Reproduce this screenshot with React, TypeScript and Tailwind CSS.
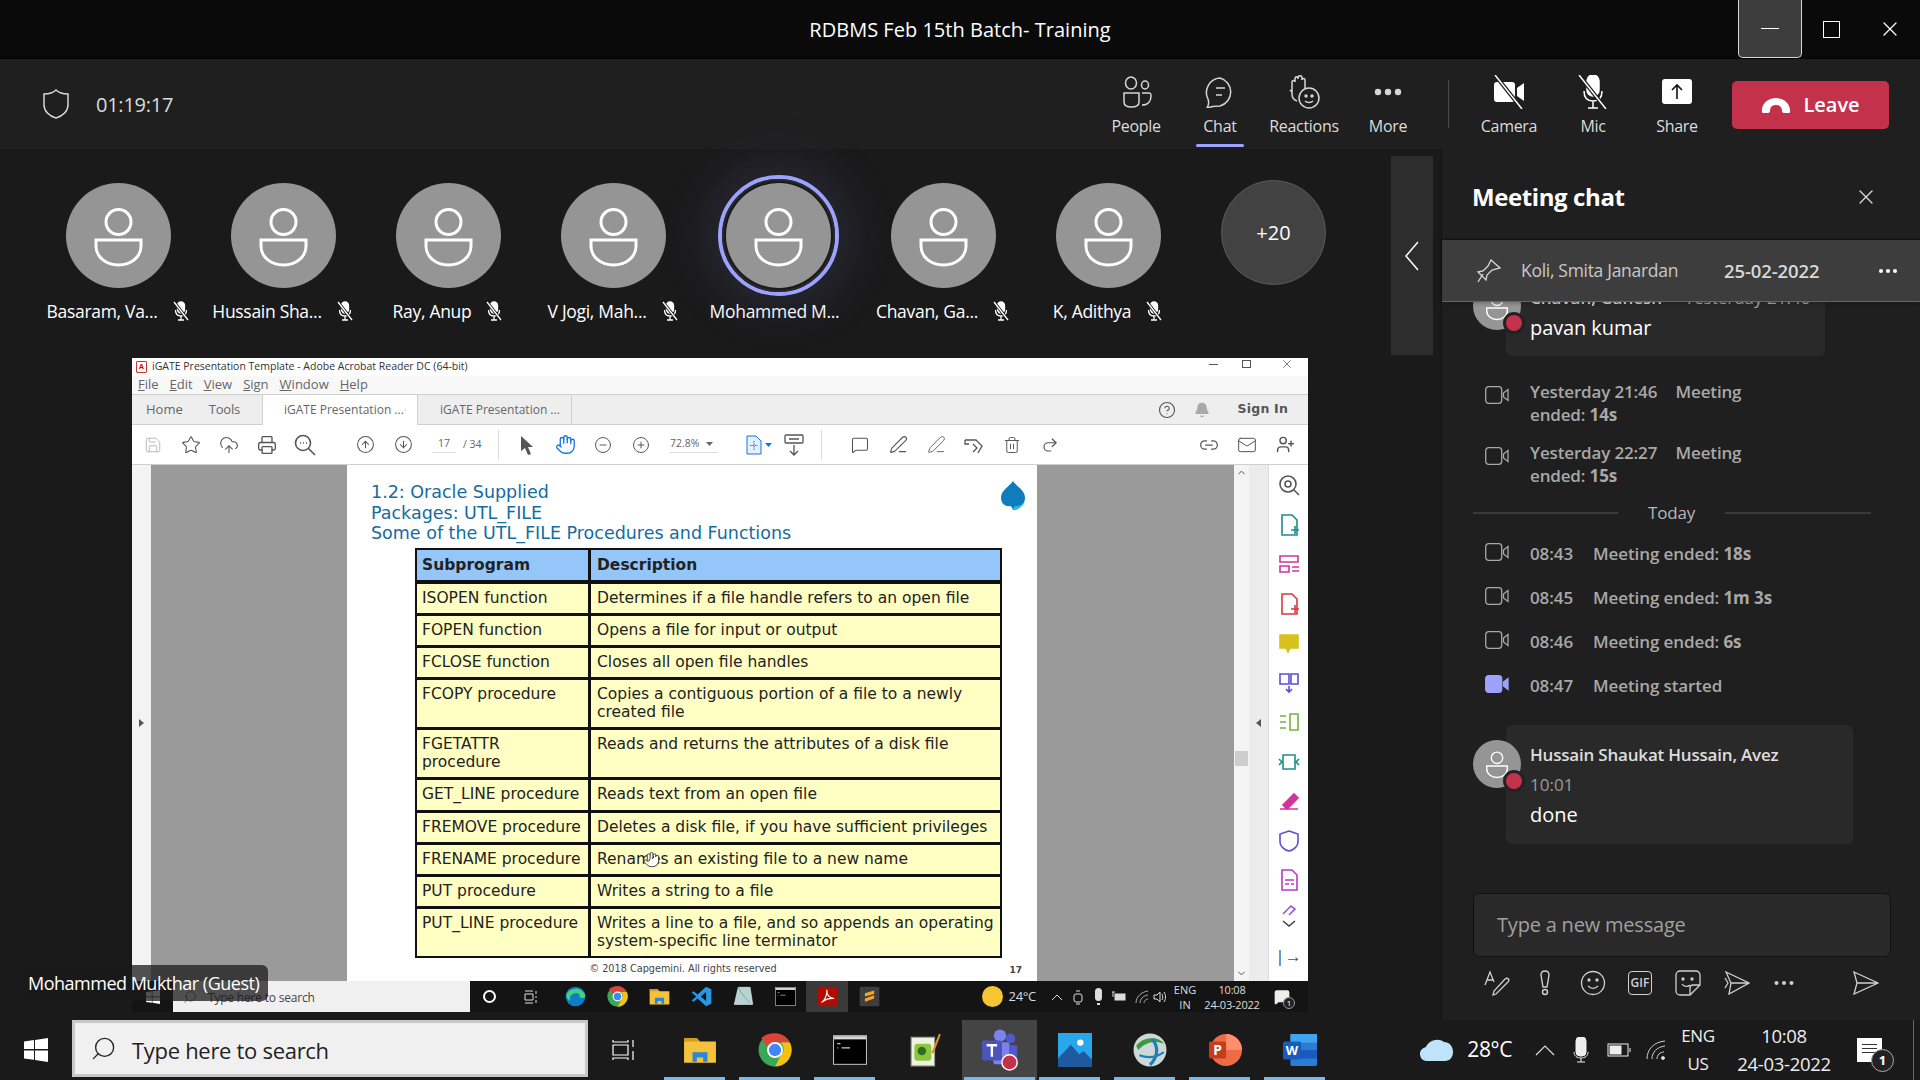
import {
  Bell,
  ChevronDown,
  ChevronUp,
  CircleArrowDown,
  CircleArrowUp,
  CircleHelp,
  CircleMinus,
  CirclePlus,
  CloudUpload,
  Hand,
  Link2,
  Mail,
  MessageSquare,
  PenLine,
  Printer,
  Redo2,
  Save,
  Search,
  Star,
  Trash2,
  UserPlus,
  X,
} from "lucide-react";

const seg = "font-['Open_Sans','Noto_Sans',sans-serif]";

const people = [
  { name: "Basaram, Va...", muted: true },
  { name: "Hussain Sha...", muted: true },
  { name: "Ray, Anup", muted: true },
  { name: "V Jogi, Mah...", muted: true },
  { name: "Mohammed M...", muted: false, active: true },
  { name: "Chavan, Ga...", muted: true },
  { name: "K, Adithya", muted: true },
];

const rows = [
  { a: "ISOPEN function", b: "Determines if a file handle refers to an open file", h: "h-[29px]" },
  { a: "FOPEN function", b: "Opens a file for input or output", h: "h-[29px]" },
  { a: "FCLOSE function", b: "Closes all open file handles", h: "h-[29px]" },
  { a: "FCOPY procedure", b: "Copies a contiguous portion of a file to a newly created file", h: "h-[47px]" },
  { a: "FGETATTR\nprocedure", b: "Reads and returns the attributes of a disk file", h: "h-[47px]" },
  { a: "GET_LINE procedure", b: "Reads text from an open file", h: "h-[30px]" },
  { a: "FREMOVE procedure", b: "Deletes a disk file, if you have sufficient privileges", h: "h-[29px]" },
  { a: "FRENAME procedure", b: "Renames an existing file to a new name", h: "h-[29px]" },
  { a: "PUT procedure", b: "Writes a string to a file", h: "h-[29px]" },
  { a: "PUT_LINE procedure", b: "Writes a line to a file, and so appends an operating system-specific line terminator", h: "h-[47px]" },
];

function PersonGlyph({ size = 105 }: { size?: number }) {
  return (
    <svg width={size} height={size} viewBox="0 0 105 105" fill="none" stroke="#fff" strokeWidth="3">
      <circle cx="52.5" cy="39" r="12.5" />
      <path d="M30 57h45v6c0 11-10 19-22.500 19S30 74 30 63z" />
    </svg>
  );
}

function MutedMic({ className = "" }: { className?: string }) {
  return (
    <svg className={className} width="20" height="20" viewBox="0 0 20 20" fill="none" stroke="#fff" strokeWidth="1.3">
      <rect x="6.500" y="1" width="7" height="11" rx="3.500" fill="#fff" />
      <path d="M4.500 9c0 4 2.500 6 5.500 6s5.500-2 5.500-6M10 15v4M7 19h6" />
      <path d="M3 1l14 18" stroke="#1a1a1a" strokeWidth="3" />
      <path d="M3 1l14 18" />
    </svg>
  );
}

function Participant({ name, muted, active }: { name: string; muted: boolean; active?: boolean }) {
  return (
    <div className="flex w-[165px] shrink-0 flex-col items-center pt-[34px]">
      <div className="relative h-[105px] w-[105px] rounded-full bg-[#959595]">
        {active && (
          <div className="absolute -inset-[8px] rounded-full border-[4px] border-[#9ea2ff] shadow-[0_0_45px_18px_rgba(98,100,167,0.16)]">
            <div className="h-full w-full rounded-full border-[2px] border-[#292929]" />
          </div>
        )}
        <div className="relative">
          <PersonGlyph />
        </div>
      </div>
      <div className={`mt-[11px] flex h-[24px] items-center gap-[13px] text-[17.500px] text-white ${seg} ${muted ? "" : "pr-[8px]"}`}>
        <span className="whitespace-nowrap tracking-[-0.3px]">{name}</span>
        {muted && <MutedMic />}
      </div>
    </div>
  );
}

function ToolItem({ label, children, selected }: { label: string; children: React.ReactNode; selected?: boolean }) {
  return (
    <div className={`relative flex h-[91px] w-[84px] flex-col items-center pt-[16px] ${seg}`}>
      <div className="flex h-[34px] items-center justify-center">{children}</div>
      <span className="mt-[5px] text-[16px] tracking-[-0.3px] text-[#dcdcdc]">{label}</span>
      {selected && <div className="absolute bottom-[3px] h-[3px] w-[48px] rounded bg-[#9ea2ff]" />}
    </div>
  );
}

function TitleBar() {
  return (
    <div className="flex h-[58px] shrink-0 items-center bg-[#0a0a0a]">
      <div className={`flex-1 pl-[182px] pt-[2px] text-center text-[20px] tracking-[0.02px] text-white ${seg}`}>RDBMS Feb 15th Batch- Training</div>
      <div className="flex h-full">
        <div className="flex w-[64px] items-center justify-center rounded-b-[5px] border-x border-b border-[#d8d8d8] bg-[#3d3d3d]">
          <div className="h-[1.500px] w-[18px] bg-white" />
        </div>
        <div className="flex w-[58px] items-center justify-center">
          <div className="h-[17px] w-[17px] border-[1.500px] border-white" />
        </div>
        <div className="flex w-[60px] items-center justify-center">
          <X size={24} strokeWidth={1.3} color="#fff" />
        </div>
      </div>
    </div>
  );
}

function MeetingBar() {
  return (
    <div className="flex h-[91px] shrink-0 items-center border-t border-[#000] bg-[#1f1f1f]">
      <svg className="ml-[42px]" width="28" height="32" viewBox="0 0 28 32" fill="none" stroke="#d8d8d8" strokeWidth="1.500">
        <path d="M14 2c3 3 7 4 12 4v11c0 6-5 11-12 13C7 28 2 23 2 17V6c5 0 9-1 12-4z" />
      </svg>
      <span className={`ml-[26px] mt-[1px] text-[20px] tracking-[-0.25px] text-[#dcdcdc] ${seg}`}>01:19:17</span>
      <div className="flex-1" />
      <ToolItem label="People">
        <svg width="32" height="32" viewBox="0 0 32 32" fill="none" stroke="#d6d6d6" strokeWidth="1.500">
          <ellipse cx="11" cy="7" rx="5.500" ry="6" />
          <ellipse cx="25" cy="9" rx="3.500" ry="4" />
          <path d="M4 17h15v9c0 3-3 5-7.500 5S4 29 4 26z" />
          <path d="M22 17h7c2 0 2 1 2 3 0 5-3 9-9 9" />
        </svg>
      </ToolItem>
      <ToolItem label="Chat" selected>
        <svg width="32" height="32" viewBox="0 0 32 32" fill="none" stroke="#d6d6d6" strokeWidth="1.500">
          <path d="M16 2a14.500 14.500 0 0 1 0 28c-4 0-8 0-13 2 2-3 2-6 1-9A14.500 14.500 0 0 1 16 2z" />
          <path d="M12 12h9M12 19h6" />
        </svg>
      </ToolItem>
      <ToolItem label="Reactions">
        <svg width="32" height="34" viewBox="0 0 32 34" fill="none" stroke="#d6d6d6" strokeWidth="1.500">
          <path d="M4 19V7c0-2 3-2 3 0V4c0-3 3-3 3 0V3c0-3 4-3 4 0v2c0-2 3-2 3 0v8M4 17l-2-2M9 26c-3-1-5-3-5-7" />
          <circle cx="21" cy="23" r="10" />
          <path d="M17 26c2 2 6 2 8 0" />
          <circle cx="18" cy="21" r="1" fill="#d6d6d6" />
          <circle cx="24" cy="21" r="1" fill="#d6d6d6" />
        </svg>
      </ToolItem>
      <ToolItem label="More">
        <svg width="28" height="8" viewBox="0 0 28 8" fill="#d6d6d6">
          <circle cx="4" cy="4" r="3.200" />
          <circle cx="14" cy="4" r="3.200" />
          <circle cx="24" cy="4" r="3.200" />
        </svg>
      </ToolItem>
      <div className="ml-[18px] mr-[18px] h-[48px] w-px bg-[#4a4a4a]" />
      <ToolItem label="Camera">
        <svg width="34" height="34" viewBox="0 0 34 34" fill="#fff">
          <rect x="2" y="7" width="21" height="20" rx="3" />
          <path d="M25 13l7-5v18l-7-5z" />
          <path d="M3 0l27 34" stroke="#1f1f1f" strokeWidth="4" />
          <path d="M3 0l27 34" stroke="#fff" strokeWidth="1.500" />
        </svg>
      </ToolItem>
      <ToolItem label="Mic">
        <svg width="34" height="34" viewBox="0 0 34 34" fill="none" stroke="#fff" strokeWidth="1.500">
          <rect x="11" y="0" width="12" height="21" rx="6" fill="#fff" />
          <path d="M8 16c0 7 4 10 9 10s9-3 9-10M17 26v7M12 33h10" />
          <path d="M3 0l27 34" stroke="#1f1f1f" strokeWidth="4" />
          <path d="M3 0l27 34" />
        </svg>
      </ToolItem>
      <ToolItem label="Share">
        <svg width="30" height="30" viewBox="0 0 30 30" fill="none">
          <rect x="0" y="2" width="30" height="25" rx="3" fill="#fff" />
          <path d="M15 22V8M10 13l5-5 5 5" stroke="#111" strokeWidth="1.600" />
        </svg>
      </ToolItem>
      <div className={`ml-[13px] mr-[31px] mt-[1px] flex h-[48px] w-[157px] items-center justify-center gap-[12px] rounded-[5px] bg-[#c4314b] text-[20px] font-semibold text-white ${seg}`}>
        <svg width="30" height="16" viewBox="0 0 30 16" fill="#fff">
          <path d="M1 15c-1-8 6-14 14-14s15 6 14 14c0 1-1 1-2 1h-4c-1 0-2-1-2-2 0-4-2-6-6-6s-6 2-6 6c0 1-1 2-2 2H3c-1 0-2 0-2-1z" />
        </svg>
        Leave
      </div>
    </div>
  );
}

function TopBtn({ children, active }: { children: React.ReactNode; active?: boolean }) {
  return (
    <span className={`flex w-[38px] items-center justify-center ${active ? "text-[#1473e6]" : "text-[#555]"}`}>{children}</span>
  );
}

function Acrobat() {
  return (
    <div className="flex h-[623px] shrink-0 flex-col bg-white">
      <div className={`flex h-[18px] items-center bg-white pl-[4px] text-[10.500px] text-[#333] ${seg}`}>
        <div className="mr-[5px] flex h-[12px] w-[11px] items-center justify-center rounded-[1px] border border-[#c33] text-[7px] font-bold text-[#c00]">A</div>
        <span>iGATE Presentation Template - Adobe Acrobat Reader DC (64-bit)</span>
        <div className="flex-1" />
        <div className="mb-[6px] mr-[24px] h-px w-[9px] bg-[#555]" />
        <div className="mb-[6px] mr-[29px] h-[8px] w-[9px] border border-[#555]" />
        <X size={14} strokeWidth={1.1} color="#333" className="mb-[6px] mr-[14px]" />
      </div>
      <div className={`flex h-[18px] items-center gap-[11px] bg-[#f8f8f8] pl-[6px] text-[13px] text-[#666] ${seg}`}>
        <span><u>F</u>ile</span>
        <span><u>E</u>dit</span>
        <span><u>V</u>iew</span>
        <span><u>S</u>ign</span>
        <span><u>W</u>indow</span>
        <span><u>H</u>elp</span>
      </div>
      <div className={`flex h-[31px] items-stretch border-y border-[#cfcfcf] bg-[#eeeeee] text-[13px] text-[#666] ${seg}`}>
        <div className="flex w-[130px] items-center gap-[26px] pl-[14px]">
          <span>Home</span>
          <span className="tracking-[-0.2px]">Tools</span>
        </div>
        <div className="-mb-px flex w-[156px] items-center justify-between border-x border-[#cfcfcf] bg-white pl-[21px] pr-[11px] text-[12px]">
          <span className="whitespace-nowrap">iGATE Presentation ...</span>
          <X size={10} strokeWidth={2.500} />
        </div>
        <div className="flex w-[154px] items-center border-r border-[#cfcfcf] pl-[22px] text-[12px]">
          <span className="whitespace-nowrap">iGATE Presentation ...</span>
        </div>
        <div className="flex-1" />
        <div className="flex items-center pr-[20px]">
          <CircleHelp size={18} strokeWidth={1.500} color="#555" />
          <Bell size={16} fill="#aaa" color="#aaa" className="ml-[18px]" />
          <span className="ml-[28px] font-['DejaVu_Sans',sans-serif] text-[12.500px] font-semibold tracking-[0.2px] text-[#555]">Sign In</span>
        </div>
      </div>
      <div className="flex h-[40px] items-center border-b border-[#cfcfcf] bg-white pl-[2px]">
        <TopBtn><Save size={18} strokeWidth={1.300} color="#b8b8b8" /></TopBtn>
        <TopBtn><Star size={20} strokeWidth={1.300} /></TopBtn>
        <TopBtn><CloudUpload size={20} strokeWidth={1.300} /></TopBtn>
        <TopBtn><Printer size={20} strokeWidth={1.600} /></TopBtn>
        <TopBtn>
          <svg width="22" height="22" viewBox="0 0 22 22" fill="none" stroke="#555" strokeWidth="1.600"><circle cx="9" cy="9" r="7.500" /><path d="M14.500 14.500L21 21" /><path d="M6 9h1M9 9h1M12 9h1" /></svg>
        </TopBtn>
        <div className="w-[22px]" />
        <TopBtn><CircleArrowUp size={19} strokeWidth={1.300} /></TopBtn>
        <TopBtn><CircleArrowDown size={19} strokeWidth={1.300} /></TopBtn>
        <span className={`ml-[10px] w-[24px] border-b border-[#ddd] text-center text-[10.500px] text-[#666] ${seg}`}>17</span>
        <span className={`ml-[7px] w-[26px] text-[10.500px] text-[#666] ${seg}`}>/ 34</span>
        <div className="ml-[9px] mr-[9px] h-[30px] w-px bg-[#ddd]" />
        <TopBtn>
          <svg width="14" height="20" viewBox="0 0 14 20" fill="#555"><path d="M1 1l12 11H8l3 7-3 1-3-7-4 3z" /></svg>
        </TopBtn>
        <TopBtn active><Hand size={21} strokeWidth={1.500} /></TopBtn>
        <TopBtn><CircleMinus size={18} strokeWidth={1.300} /></TopBtn>
        <TopBtn><CirclePlus size={18} strokeWidth={1.300} /></TopBtn>
        <span className={`ml-[10px] flex w-[48px] items-center border-b border-[#ddd] text-[10.500px] text-[#666] ${seg}`}>
          72.8%
          <svg className="ml-[7px]" width="7" height="4" viewBox="0 0 7 4" fill="#666"><path d="M0 0h7L3.500 4z" /></svg>
        </span>
        <div className="ml-[28px] flex w-[29px] items-center">
          <svg width="16" height="20" viewBox="0 0 16 20" fill="#e6f0fb" stroke="#1473e6"><path d="M1 1h9l5 5v13H1z" /><path d="M8 6v9M4 10.500h8" stroke="#1473e6" strokeDasharray="1.500 1" /></svg>
          <svg className="ml-[3px]" width="7" height="4" viewBox="0 0 7 4" fill="#1473e6"><path d="M0 0h7L3.500 4z" /></svg>
        </div>
        <TopBtn>
          <svg width="20" height="22" viewBox="0 0 20 22" fill="none" stroke="#555" strokeWidth="1.300"><rect x="1" y="1" width="18" height="8" rx="1" /><path d="M5 5h10M10 11v10M6 17l4 4 4-4" /></svg>
        </TopBtn>
        <div className="ml-[8px] h-[30px] w-px bg-[#ddd]" />
        <div className="ml-[19px] flex">
          <TopBtn><MessageSquare size={18} strokeWidth={1.400} /></TopBtn>
          <TopBtn><PenLine size={19} strokeWidth={1.400} /></TopBtn>
          <TopBtn><PenLine size={19} strokeWidth={1.100} /></TopBtn>
          <TopBtn>
            <svg width="20" height="18" viewBox="0 0 20 18" fill="none" stroke="#555" strokeWidth="1.300"><path d="M1 4h11l6 6-4 7M1 4v4h4" /><path d="M9 8l4 4-4 4" /></svg>
          </TopBtn>
          <TopBtn><Trash2 size={18} strokeWidth={1.300} /></TopBtn>
          <TopBtn><Redo2 size={18} strokeWidth={1.600} /></TopBtn>
        </div>
        <div className="flex-1" />
        <TopBtn><Link2 size={20} strokeWidth={1.500} /></TopBtn>
        <TopBtn><Mail size={20} strokeWidth={1.200} /></TopBtn>
        <TopBtn><UserPlus size={19} strokeWidth={1.800} /></TopBtn>
        <div className="w-[4px]" />
      </div>
      <div className="flex min-h-0 flex-1">
        <div className="flex w-[19px] items-center justify-center bg-[#f3f3f3]">
          <svg width="5" height="8" viewBox="0 0 5 8" fill="#555"><path d="M0 0l5 4-5 4z" /></svg>
        </div>
        <div className="w-[196px] bg-[#9a9a9a]" />
        <SlidePage />
        <div className="w-[197px] bg-[#9a9a9a]" />
        <div className="flex w-[15px] flex-col items-center justify-between bg-[#f4f4f4] py-[2px]">
          <ChevronUp size={11} color="#444" />
          <div className="mt-[70px] h-[15px] w-[13px] bg-[#cdcdcd]" />
          <ChevronDown size={11} color="#444" />
        </div>
        <div className="flex w-[19px] items-center justify-center bg-[#ececec]">
          <svg width="5" height="8" viewBox="0 0 5 8" fill="#555"><path d="M5 0L0 4l5 4z" /></svg>
        </div>
        <RightRail />
      </div>
    </div>
  );
}

function SlidePage() {
  return (
    <div className="relative w-[690px] bg-white font-['DejaVu_Sans',sans-serif]">
      <div className="pl-[24px] pt-[17px] text-[17.500px] leading-[20.500px] text-[#146c9e]">
        <div>1.2: Oracle Supplied</div>
        <div>Packages: UTL_FILE</div>
        <div>Some of the UTL_FILE Procedures and Functions</div>
      </div>
      <svg className="absolute right-[11px] top-[16px]" width="26" height="30" viewBox="0 0 26 30">
        <path d="M13 0c4 6 12 9 12 17 0 6-5 9-9 8l-3 4-2-4C6 26 1 23 1 17 1 9 9 6 13 0z" fill="#0f7cbd" />
        <path d="M16 25c-2 0-4 3-3 4 4 1 9-3 12-8-2 2-5 4-9 4z" fill="#2bb6e8" />
      </svg>
      <div className="absolute left-[68px] top-[83px] flex w-[587px] flex-col gap-[3px] border-[2px] border-[#111] bg-[#111] text-[15.500px] leading-[18px] text-[#222]">
        <div className="mb-[1px] flex h-[30px] gap-[3px] font-bold">
          <div className="flex w-[171px] items-center bg-[#94c6f9] pl-[5px]">Subprogram</div>
          <div className="flex flex-1 items-center bg-[#94c6f9] pl-[6px]">Description</div>
        </div>
        {rows.map((r) => (
          <div key={r.a} className={`flex gap-[3px] ${r.h}`}>
            <div className="w-[171px] whitespace-pre-line bg-[#ffffc4] pl-[5px] pt-[5px]">{r.a}</div>
            <div className="flex-1 bg-[#ffffc4] pl-[6px] pr-[4px] pt-[5px]">{r.b}</div>
          </div>
        ))}
      </div>
      <Hand className="absolute left-[296px] top-[386px]" size={17} strokeWidth={1.300} color="#333" fill="#fff" />
      <div className="absolute bottom-[4px] left-0 w-full pr-[18px] text-center text-[9.700px] text-[#444]">© 2018 Capgemini. All rights reserved</div>
      <div className="absolute bottom-[4px] right-[15px] text-[9px] font-bold text-[#444]">17</div>
    </div>
  );
}

function RightRail() {
  const doc = "M5 2h10l5 5v15H5z";
  const items = [
    { c: "#555", d: "M11 3a8 8 0 1 0 0 16 8 8 0 0 0 0-16zM17 17l5 5M8 11a3 3 0 1 0 6 0 3 3 0 0 0-6 0z" },
    { c: "#1f8a8c", d: `${doc}M14 17h8M18 13v8` },
    { c: "#d1359a", d: "M3 4h18v6H3zM3 14h9v6H3zM15 15h7M15 19h7" },
    { c: "#d8393f", d: `${doc}M14 17h8M18 13v8` },
    { c: "#d7c21d", d: "M3 4h18v13H13l-2 4-2-4H3zM7 9h10M7 13h7", f: "#d7c21d" },
    { c: "#5a4fd8", d: "M3 3h9v10H3zM14 3h7v10h-7zM12 15v6M9 18l3 3 3-3" },
    { c: "#72b53c", d: "M13 4h8v16h-8zM3 6h6M3 12h6M3 18h6" },
    { c: "#1d8f86", d: "M6 5h12v14H6zM2 9l3 3-3 3M22 9l-3 3 3 3" },
    { c: "#d1359a", d: "M3 20h18M6 16L17 5l4 4-11 11z", f: "#d1359a" },
    { c: "#5a4fd8", d: "M12 2l9 3v8c0 4-4 8-9 9-5-1-9-5-9-9V5z" },
    { c: "#b53cc0", d: `${doc}M8 12h9M8 16h4M14 16h3` },
  ];
  return (
    <div className="flex w-[40px] flex-col items-center gap-[15.500px] border-l border-[#ddd] bg-white pt-[8px]">
      {items.map((it, i) => (
        <svg key={i} width="24" height="24" viewBox="0 0 24 24" fill={it.f ?? "none"} stroke={it.c} strokeWidth="1.600">
          <path d={it.d} />
        </svg>
      ))}
      <svg className="-mt-[4px]" width="20" height="26" viewBox="0 0 20 26" fill="none" stroke="#9a55d0" strokeWidth="1.600">
        <path d="M4 10l8-8 4 3-6 6" />
        <path d="M4 17l6 5 6-5" stroke="#444" />
      </svg>
      <div className="mt-[2px] text-[17px] leading-none text-[#555]">|→</div>
    </div>
  );
}

function AppTile({ kind, size }: { kind: string; size: number }) {
  if (kind === "explorer")
    return (
      <svg width={size} height={size} viewBox="0 0 32 32">
        <path d="M1 5h12l3 3h15v20H1z" fill="#f5c33b" />
        <path d="M1 5h12l3 3H1z" fill="#d59a1f" />
        <path d="M9 27V18h14v9h-4v-4h-6v4z" fill="#2a86d8" />
      </svg>
    );
  if (kind === "chrome")
    return (
      <svg width={size} height={size} viewBox="0 0 32 32">
        <circle cx="16" cy="16" r="15.500" fill="#3aa757" />
        <path d="M16 .5A15.500 15.500 0 0 1 30 9H16a7 7 0 0 0-6.500 4.500L3 5A15.500 15.500 0 0 1 16 .5z" fill="#db4437" />
        <path d="M30 9a15.500 15.500 0 0 1-14 22.500L22 20a7 7 0 0 0-1-11z" fill="#f4c20d" />
        <circle cx="16" cy="16" r="7.500" fill="#fff" />
        <circle cx="16" cy="16" r="5.800" fill="#4285f4" />
      </svg>
    );
  if (kind === "cmd")
    return (
      <svg width={size} height={size} viewBox="0 0 32 32">
        <rect x="0.500" y="2.500" width="31" height="27" fill="#000" stroke="#bbb" />
        <rect x="1" y="3" width="30" height="3" fill="#d8d8d8" />
        <path d="M4 10h3M4 14h1M8 14h8" stroke="#ccc" />
      </svg>
    );
  if (kind === "npp")
    return (
      <svg width={size} height={size} viewBox="0 0 32 32">
        <rect x="3" y="4" width="22" height="27" fill="#eef3df" stroke="#999" />
        <rect x="6" y="10" width="16" height="16" rx="3" fill="#8cc63f" />
        <circle cx="13" cy="17" r="4" fill="#2f6d1c" />
        <path d="M23 19L30 1" stroke="#d9902c" strokeWidth="2" />
      </svg>
    );
  if (kind === "teams")
    return (
      <svg width={size} height={size} viewBox="0 0 40 44">
        <circle cx="20" cy="7" r="6.500" fill="#7b83eb" />
        <circle cx="31" cy="10" r="5" fill="#5059c9" />
        <rect x="13" y="14" width="17" height="23" rx="3" fill="#7b83eb" />
        <path d="M30 17h8v14c0 3-3 5-8 5z" fill="#5059c9" />
        <rect x="1" y="12" width="21" height="21" rx="2" fill="#4b53bc" />
        <path d="M6 17h11M11.500 17v12" stroke="#fff" strokeWidth="2.500" />
        <circle cx="30" cy="35" r="8" fill="#c4314b" stroke="#fff" strokeWidth="1.500" />
      </svg>
    );
  if (kind === "photos")
    return (
      <svg width={size} height={size} viewBox="0 0 32 32">
        <rect x="0" y="0" width="32" height="32" fill="#28a8ea" />
        <circle cx="21" cy="9" r="3" fill="#fff" />
        <path d="M0 24L12 11l8 9 4-3 8 8v7H0z" fill="#1e5aa0" />
      </svg>
    );
  if (kind === "globe")
    return (
      <svg width={size} height={size} viewBox="0 0 32 32" fill="none">
        <circle cx="16" cy="16" r="15.500" fill="#cfd8d8" />
        <path d="M3 12C10 3 24 3 29 10c-8-3-17-2-24 6z" fill="#3a9a3c" />
        <path d="M18 6c6 6 6 16-2 24" stroke="#1d7fb8" strokeWidth="3" />
        <path d="M6 21c8 3 16 2 23-3" stroke="#1d7fb8" strokeWidth="2" />
      </svg>
    );
  if (kind === "ppt")
    return (
      <svg width={size} height={size} viewBox="0 0 32 32">
        <circle cx="17" cy="16" r="15" fill="#ed6c47" />
        <path d="M17 1a15 15 0 0 1 15 15H17z" fill="#ff8f6b" />
        <rect x="1" y="8" width="16" height="16" rx="1.500" fill="#c43e1c" />
        <text x="9" y="21" textAnchor="middle" fontSize="13" fontWeight="700" fill="#fff" fontFamily="'Open Sans',sans-serif">P</text>
      </svg>
    );
  if (kind === "word")
    return (
      <svg width={size} height={size} viewBox="0 0 32 32">
        <rect x="7" y="1" width="25" height="30" rx="1.500" fill="#2b7cd3" />
        <rect x="7" y="1" width="25" height="8" fill="#41a5ee" />
        <rect x="7" y="16" width="25" height="8" fill="#185abd" />
        <rect x="0" y="8" width="17" height="17" rx="1.500" fill="#185abd" />
        <text x="8.500" y="21" textAnchor="middle" fontSize="12" fontWeight="700" fill="#fff" fontFamily="'Open Sans',sans-serif">W</text>
      </svg>
    );
  if (kind === "edge")
    return (
      <svg width={size} height={size} viewBox="0 0 32 32">
        <circle cx="16" cy="16" r="15" fill="#0f7cc4" />
        <path d="M2 14C4 4 24-2 31 14c0 5-8 6-9 2 1-4-3-6-7-5-6 1-9 6-7 12-3-2-6-5-6-9z" fill="#43d17f" />
      </svg>
    );
  if (kind === "vscode")
    return (
      <svg width={size} height={size} viewBox="0 0 32 32" fill="#2a97e0">
        <path d="M23 1l8 4v22l-8 4-13-12-6 5-3-2 7-6-7-6 3-2 6 5zM23 9l-8 7 8 7z" />
      </svg>
    );
  if (kind === "notes")
    return (
      <svg width={size} height={size} viewBox="0 0 32 32">
        <path d="M8 2h18l4 26H2z" fill="#b7d3d0" stroke="#e8f0ee" />
        <path d="M8 2l4 8 14 16" stroke="#6d8c8a" fill="none" />
      </svg>
    );
  if (kind === "acrobat")
    return (
      <svg width={size} height={size} viewBox="0 0 32 32" fill="none">
        <rect x="1" y="1" width="30" height="30" rx="3" fill="#b30b00" />
        <path d="M7 25c5-3 9-13 8-19-1 7 4 13 11 13-7-1-14 2-19 6z" stroke="#fff" strokeWidth="1.800" />
      </svg>
    );
  return (
    <svg width={size} height={size} viewBox="0 0 32 32">
      <rect x="1" y="1" width="30" height="30" rx="2" fill="#3e3e3e" />
      <path d="M9 11l14-4v5L9 16zM23 14v5L9 24v-5z" fill="#f5a623" />
    </svg>
  );
}

function InnerTaskbar() {
  const tiles = ["edge", "chrome", "explorer", "vscode", "notes", "cmd", "acrobat", "sublime"];
  return (
    <div className={`flex h-[31px] shrink-0 items-center bg-[#141414] ${seg}`}>
      <div className="flex w-[41px] items-center justify-center">
        <WinLogo size={14} />
      </div>
      <div className="flex h-full w-[297px] items-center bg-[#f0f0f0] pl-[10px] text-[#444]">
        <Search size={14} strokeWidth={1.300} className="-scale-x-100" />
        <span className="ml-[11px] mt-[3px] text-[12px] tracking-[-0.2px]">Type here to search</span>
      </div>
      <div className="ml-[13px] h-[13px] w-[13px] rounded-full border-[2px] border-white" />
      <svg className="ml-[28px]" width="14" height="14" viewBox="0 0 14 14" fill="none" stroke="#ddd"><path d="M1 1h8M1 4h8v6H1zM1 13h8M12 1v3M12 6v2M12 10v3" /></svg>
      <div className="ml-[16px] flex h-full">
        {tiles.map((t) => (
          <div key={t} className={`flex h-full w-[42px] items-center justify-center ${t === "acrobat" ? "bg-[#3a3a3a]" : ""}`}>
            <AppTile kind={t} size={21} />
          </div>
        ))}
      </div>
      <div className="flex-1" />
      <div className="h-[21px] w-[21px] rounded-full bg-[#f7c533]" />
      <span className="ml-[6px] text-[13px] tracking-[-0.3px] text-[#ddd]">24°C</span>
      <svg className="ml-[15px]" width="12" height="8" viewBox="0 0 12 8" fill="none" stroke="#ddd"><path d="M1 7l5-5 5 5" /></svg>
      <svg className="ml-[9px]" width="12" height="16" viewBox="0 0 12 16" fill="none" stroke="#ddd"><rect x="2" y="5" width="8" height="8" rx="2" /><path d="M4 2h4M4 15h4" /></svg>
      <svg className="ml-[9px]" width="11" height="18" viewBox="0 0 11 18" fill="#ddd"><rect x="2" y="0" width="7" height="13" rx="3.500" /><path d="M4 15h3v2H4z" /></svg>
      <svg className="ml-[8px]" width="14" height="12" viewBox="0 0 14 12" fill="none" stroke="#ddd"><rect x="3" y="3" width="10" height="6" fill="#ddd" /><path d="M0 1h3M1 1v5" /></svg>
      <svg className="ml-[9px]" width="14" height="14" viewBox="0 0 14 14" fill="none" stroke="#aaa"><path d="M1 13C1 7 6 2 13 1M5 13c0-4 3-7 8-8M9 13c0-2 2-4 4-4" /></svg>
      <svg className="ml-[4px]" width="14" height="14" viewBox="0 0 14 14" fill="none" stroke="#ddd"><path d="M1 5h3l3-3v10l-3-3H1zM9 4c1 2 1 4 0 6M11 2c2 3 2 7 0 10" /></svg>
      <div className="ml-[6px] flex w-[24px] flex-col items-center text-[11px] leading-[15px] text-[#ddd]">
        <span>ENG</span>
        <span>IN</span>
      </div>
      <div className="ml-[7px] flex w-[56px] flex-col items-center text-[11px] leading-[15px] tracking-[-0.2px] text-[#ddd]">
        <span>10:08</span>
        <span>24-03-2022</span>
      </div>
      <div className="relative ml-[14px] mr-[18px]">
        <MessageSquare size={16} fill="#eee" color="#eee" />
        <div className="absolute -bottom-[4px] -right-[5px] flex h-[12px] w-[12px] items-center justify-center rounded-full border border-[#999] bg-[#222] text-[8px] text-white">1</div>
      </div>
    </div>
  );
}

function WinLogo({ size }: { size: number }) {
  return (
    <svg width={size} height={size} viewBox="0 0 24 24" fill="#fff">
      <path d="M0 3.500l10-1.400V11H0zM11 2l13-2v11H11zM0 12.500h10v9.300L0 20.500zM11 12.500h13V24l-13-2z" />
    </svg>
  );
}

function Stage() {
  return (
    <div className="relative flex w-[1441px] shrink-0 flex-col bg-[#1a1a1a]">
      <div className="flex h-[209px] shrink-0 pl-[36px]">
        {people.map((p) => (
          <Participant key={p.name} {...p} />
        ))}
        <div className="flex w-[165px] shrink-0 justify-center pt-[31px]">
          <div className={`flex h-[105px] w-[105px] items-center justify-center rounded-full border border-[#5a5a5a] bg-[#424242] text-[20px] text-white ${seg}`}>+20</div>
        </div>
        <div className="flex-1" />
        <div className="mr-[8px] mt-[7px] flex h-[199px] w-[42px] items-center justify-center bg-[#2d2d2d]">
          <svg width="16" height="30" viewBox="0 0 16 30" fill="none" stroke="#fff" strokeWidth="1.500"><path d="M14 1L2 15l12 14" /></svg>
        </div>
      </div>
      <div className="ml-[132px] w-[1176px]">
        <Acrobat />
        <InnerTaskbar />
      </div>
      <div className={`absolute left-[20px] top-[816px] flex h-[36px] w-[248px] items-center rounded-[6px] bg-[#1a1a1a]/75 pl-[8px] text-[18px] tracking-[-0.5px] text-white ${seg}`}>
        Mohammed Mukthar (Guest)
      </div>
    </div>
  );
}

function CamIcon({ filled }: { filled?: boolean }) {
  const c = filled ? "#9ea2ff" : "#a8a8a8";
  return (
    <svg width="24" height="18" viewBox="0 0 24 18" fill={filled ? c : "none"} stroke={c} strokeWidth="1.300">
      <rect x="0.700" y="0.700" width="16" height="16.600" rx="3" />
      <path d="M18.500 7l4.500-3.500v11L18.500 11z" />
    </svg>
  );
}

function SystemRow({ time, label, dur, filled }: { time: string; label: string; dur?: string; filled?: boolean }) {
  return (
    <div className="flex h-[24px] items-center text-[17px] font-semibold tracking-[-0.1px] text-[#a8a8a8]">
      <div className="ml-[43px] w-[45px] -translate-y-[2px]">
        <CamIcon filled={filled} />
      </div>
      <span className="w-[63px]">{time}</span>
      <span>
        {label}
        {dur && <b className="font-bold"> {dur}</b>}
      </span>
    </div>
  );
}

function Avatar() {
  return (
    <div className="relative h-[48px] w-[48px] shrink-0 rounded-full bg-[#959595]">
      <PersonGlyph size={48} />
      <div className="absolute -bottom-[4px] -right-[4px] h-[22px] w-[22px] rounded-full border-[3px] border-[#222] bg-[#c4314b]" />
    </div>
  );
}

function ChatPanel() {
  return (
    <div className={`flex w-[479px] flex-col border-l border-[#111] bg-[#1f1f1f] ${seg}`}>
      <div className="flex h-[90px] shrink-0 items-center justify-between pl-[30px] pr-[42px] pt-[5px]">
        <span className="text-[24px] font-bold tracking-[-0.4px] text-white">Meeting chat</span>
        <X size={24} strokeWidth={1.200} color="#ddd" />
      </div>
      <div className="z-10 flex h-[63px] shrink-0 items-center border-y border-t-[#111] border-b-[#666] bg-[#3d3d3d] pl-[34px] shadow-[0_1px_4px_rgba(0,0,0,0.3)]">
        <svg width="26" height="26" viewBox="0 0 26 26" fill="none" stroke="#d8d8d8" strokeWidth="1.300">
          <path d="M15 2l9 8-8 2-5 5-1 5-8-8 5-1 5-5zM7 16l-5 8" />
        </svg>
        <span className="ml-[19px] w-[203px] text-[17.500px] tracking-[-0.3px] text-[#c8c8c8]">Koli, Smita Janardan</span>
        <span className="text-[18.500px] font-semibold tracking-[-0.1px] text-[#d8d8d8]">25-02-2022</span>
        <svg className="ml-[58px]" width="20" height="6" viewBox="0 0 20 6" fill="#fff"><circle cx="3" cy="3" r="2" /><circle cx="10" cy="3" r="2" /><circle cx="17" cy="3" r="2" /></svg>
      </div>
      <div className="min-h-0 flex-1 overflow-hidden">
        <div className="relative -mt-[38px] ml-[64px] h-[92px] w-[319px] rounded-b-[6px] bg-[#292929] pl-[24px]">
          <div className="absolute -left-[33px] top-[18px]"><Avatar /></div>
          <div className="pt-[24px] text-[17px] font-semibold leading-[20px] text-[#ddd]">Chavan, Ganesh <span className="ml-[18px] font-normal text-[#aaa]">Yesterday 21:46</span></div>
          <div className="mt-[7px] text-[20px] leading-[26px] tracking-[-0.1px] text-white">pavan kumar</div>
        </div>
        <div className="mt-[24px] flex text-[17px] font-semibold leading-[23px] tracking-[-0.15px] text-[#a8a8a8]">
          <div className="ml-[43px] w-[45px] pt-[6px]"><CamIcon /></div>
          <div className="w-[240px]">Yesterday 21:46 <span className="ml-[14px]">Meeting</span><br />ended: <b className="font-bold">14s</b></div>
        </div>
        <div className="mt-[15px] flex text-[17px] font-semibold leading-[23px] tracking-[-0.15px] text-[#a8a8a8]">
          <div className="ml-[43px] w-[45px] pt-[6px]"><CamIcon /></div>
          <div className="w-[240px]">Yesterday 22:27 <span className="ml-[14px]">Meeting</span><br />ended: <b className="font-bold">15s</b></div>
        </div>
        <div className="mt-[14px] flex h-[24px] items-center pl-[31px]">
          <div className="h-[2px] w-[145px] bg-[#3a3a3a]" />
          <span className="w-[107px] text-center text-[17px] tracking-[-0.2px] text-[#b8b8b8]">Today</span>
          <div className="h-[2px] w-[146px] bg-[#3a3a3a]" />
        </div>
        <div className="mt-[17px] flex flex-col gap-[20px]">
          <SystemRow time="08:43" label="Meeting ended:" dur="18s" />
          <SystemRow time="08:45" label="Meeting ended:" dur="1m 3s" />
          <SystemRow time="08:46" label="Meeting ended:" dur="6s" />
          <SystemRow time="08:47" label="Meeting started" filled />
        </div>
        <div className="relative ml-[64px] mt-[27px] h-[119px] w-[347px] rounded-[6px] bg-[#292929] pl-[24px] pt-[18px]">
          <div className="absolute -left-[33px] top-[15px]"><Avatar /></div>
          <div className="text-[17px] font-semibold leading-[24px] tracking-[-0.2px] text-[#dedede]">Hussain Shaukat Hussain, Avez</div>
          <div className="mt-[6px] text-[17px] leading-[24px] text-[#9a9a9a]">10:01</div>
          <div className="mt-[5px] text-[20px] leading-[26px] text-white">done</div>
        </div>
        <div className="ml-[31px] mt-[49px] flex h-[64px] w-[418px] items-center rounded-[6px] border border-[#111] bg-[#292929] pl-[23px] text-[20px] tracking-[-0.2px] text-[#a0a0a0]">
          Type a new message
        </div>
        <div className="ml-[42px] mt-[14px] flex h-[24px] items-center text-[#d0d0d0]">
          <div className="flex w-[48px]">
            <svg width="26" height="26" viewBox="0 0 26 26" fill="none" stroke="currentColor" strokeWidth="1.300"><path d="M1 15L6 2l4 10M3 10h6M12 24l-3 1 1-4L21 9c3-2 5 1 3 3z" /></svg>
          </div>
          <div className="flex w-[48px] pl-[6px]">
            <svg width="14" height="26" viewBox="0 0 14 26" fill="none" stroke="currentColor" strokeWidth="1.400"><path d="M7 1c3 0 4 2 4 4l-2 12H5L3 5c0-2 1-4 4-4z" /><circle cx="7" cy="22" r="2.500" /></svg>
          </div>
          <div className="flex w-[48px]">
            <svg width="26" height="26" viewBox="0 0 26 26" fill="none" stroke="currentColor" strokeWidth="1.300"><circle cx="13" cy="13" r="11.500" /><path d="M8 16c3 3 7 3 10 0" /><circle cx="9" cy="10" r="1" fill="currentColor" /><circle cx="17" cy="10" r="1" fill="currentColor" /></svg>
          </div>
          <div className="flex h-[24px] w-[24px] items-center justify-center rounded-[4px] border border-current text-[12px] font-semibold">GIF</div>
          <div className="ml-[23px] flex w-[49px]">
            <svg width="26" height="26" viewBox="0 0 26 26" fill="none" stroke="currentColor" strokeWidth="1.300"><path d="M25 15V5a4 4 0 0 0-4-4H5a4 4 0 0 0-4 4v16a4 4 0 0 0 4 4h10zM25 15h-7c-2 0-3 1-3 3v7" /><path d="M7 14c2 3 6 3 8 1" /><circle cx="8" cy="9" r="1" fill="currentColor" /><circle cx="17" cy="9" r="1" fill="currentColor" /></svg>
          </div>
          <div className="flex w-[48px]">
            <svg width="26" height="24" viewBox="0 0 26 24" fill="none" stroke="currentColor" strokeWidth="1.300"><path d="M2 1l23 11L5 23l2-11zM7 12h18M1 7l3 5-3 5" /></svg>
          </div>
          <svg className="ml-[2px]" width="20" height="6" viewBox="0 0 20 6" fill="currentColor"><circle cx="2.500" cy="3" r="2" /><circle cx="10" cy="3" r="2" /><circle cx="17.500" cy="3" r="2" /></svg>
          <div className="flex-1" />
          <svg className="mr-[41px]" width="26" height="24" viewBox="0 0 26 24" fill="none" stroke="currentColor" strokeWidth="1.300"><path d="M1 1l24 11L1 23l3-11zM4 12h21" /></svg>
        </div>
      </div>
    </div>
  );
}

function TaskBar() {
  const apps = [
    { k: "explorer", open: true },
    { k: "chrome", open: true },
    { k: "cmd", open: true },
    { k: "npp", open: false },
    { k: "teams", open: true, active: true },
    { k: "photos", open: true },
    { k: "globe", open: true },
    { k: "ppt", open: true },
    { k: "word", open: true },
  ];
  return (
    <div className={`flex h-[60px] shrink-0 items-center bg-[#1a1a1a] ${seg}`}>
      <div className="flex w-[72px] items-center justify-center">
        <WinLogo size={24} />
      </div>
      <div className="flex h-[57px] w-[516px] items-center self-start border-[3px] border-[#c8c8c8] bg-[#f0f0f0] pl-[15px] text-[#222]">
        <Search size={27} strokeWidth={1.200} className="-scale-x-100" />
        <span className="ml-[15px] pt-[4px] text-[22px] tracking-[-0.3px]">Type here to search</span>
      </div>
      <svg className="ml-[24px]" width="22" height="22" viewBox="0 0 22 22" fill="none" stroke="#fff" strokeWidth="1.200"><path d="M1 1v2h15V1M1 6h15v10H1zM1 21v-2h15v2M21 1v7M21 12v9" /></svg>
      <div className="ml-[28px] flex h-full">
        {apps.map((a) => (
          <div key={a.k} className={`relative flex h-full w-[75px] items-center justify-center ${a.active ? "bg-[#444]" : ""}`}>
            <AppTile kind={a.k} size={a.k === "teams" ? 42 : 34} />
            {a.open && <div className={`absolute bottom-0 left-[2px] h-[3px] bg-[#76b9ed] ${a.active ? "w-[71px]" : "w-[61px]"}`} />}
          </div>
        ))}
      </div>
      <div className="flex-1" />
      <svg width="34" height="24" viewBox="0 0 34 24"><path d="M8 23a7 7 0 0 1-2-14c2-6 12-10 18-5 5 0 9 4 9 10 0 5-3 9-8 9z" fill="#bfe3fb" /></svg>
      <span className="ml-[13px] text-[21px] tracking-[-0.4px] text-white">28°C</span>
      <svg className="ml-[23px]" width="20" height="12" viewBox="0 0 20 12" fill="none" stroke="#ddd" strokeWidth="1.200"><path d="M1 11l9-9 9 9" /></svg>
      <svg className="ml-[18px]" width="16" height="26" viewBox="0 0 16 26" fill="none" stroke="#eee"><rect x="3" y="0" width="10" height="19" rx="4" fill="#eee" /><path d="M1 15c0 4 3 6 7 6s7-2 7-6M8 21v4M4 25h8" /></svg>
      <svg className="ml-[18px]" width="24" height="14" viewBox="0 0 24 14" fill="none" stroke="#eee"><rect x="1" y="1" width="20" height="12" /><rect x="3" y="3" width="11" height="8" fill="#eee" /><path d="M23 5v4" /></svg>
      <svg className="ml-[15px]" width="20" height="20" viewBox="0 0 20 20" fill="none" stroke="#ccc"><path d="M1 19C1 9 8 2 19 1M6 19c0-7 5-12 13-13M11 19c0-4 3-7 7-7" /><circle cx="17" cy="18" r="1.500" fill="#eee" /></svg>
      <div className="ml-[16px] flex w-[32px] flex-col items-center text-[17px] leading-[28px] tracking-[-0.3px] text-[#eee]">
        <span>ENG</span>
        <span>US</span>
      </div>
      <div className="ml-[21px] flex w-[98px] flex-col items-center text-[18.500px] leading-[28px] tracking-[-0.3px] text-[#eee]">
        <span>10:08</span>
        <span>24-03-2022</span>
      </div>
      <div className="relative ml-[24px] mr-[31px] h-[24px] w-[25px] bg-white">
        <div className="mx-auto mt-[6px] h-px w-[15px] bg-[#333]" />
        <div className="mx-auto mt-[3px] h-px w-[15px] bg-[#333]" />
        <div className="mx-auto mt-[3px] h-px w-[15px] bg-[#333]" />
        <div className="absolute -bottom-[10px] -right-[12px] flex h-[23px] w-[23px] items-center justify-center rounded-full border border-[#aaa] bg-[#222] text-[13px] font-bold text-white">1</div>
      </div>
      <div className="mr-[6px] h-full w-px bg-[#666]" />
    </div>
  );
}

export default function App() {
  return (
    <div className="flex h-[1080px] w-[1920px] flex-col overflow-hidden bg-[#1a1a1a]">
      <TitleBar />
      <MeetingBar />
      <div className="flex min-h-0 flex-1">
        <Stage />
        <ChatPanel />
      </div>
      <TaskBar />
    </div>
  );
}
